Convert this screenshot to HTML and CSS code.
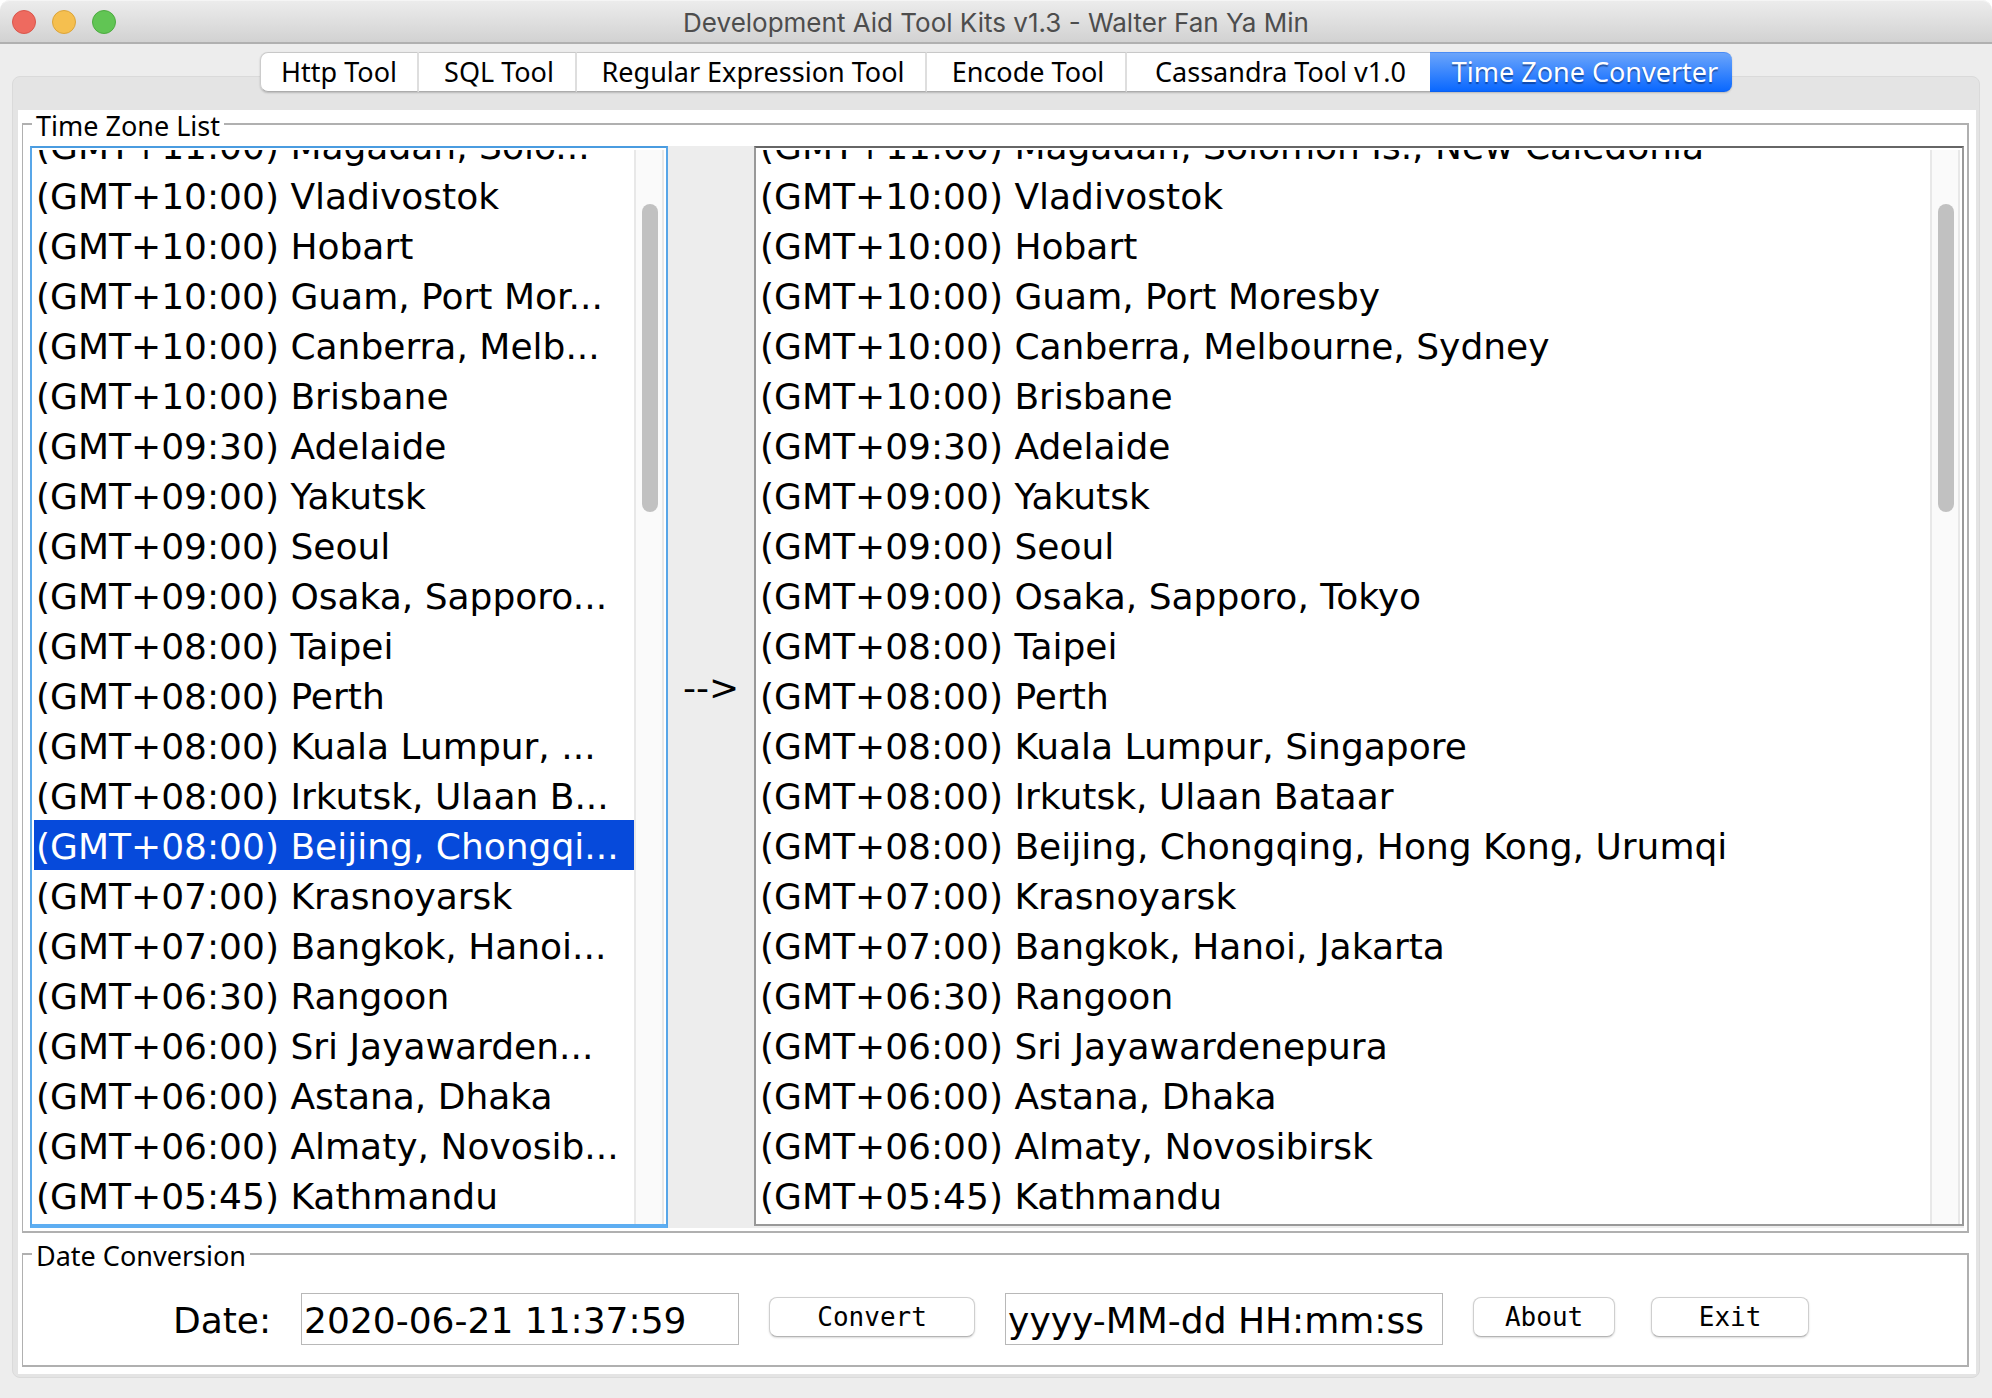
FILE: index.html
```html
<!DOCTYPE html>
<html lang="en">
<head>
<meta charset="utf-8">
<title>Development Aid Tool Kits v1.3 - Walter Fan Ya Min</title>
<link rel="stylesheet" href="styles.css">
</head>
<body>
<div class="window">
  <header class="titlebar">
    <div class="lights">
      <button class="light light-close" aria-label="Close"></button>
      <button class="light light-minimize" aria-label="Minimize"></button>
      <button class="light light-zoom" aria-label="Zoom"></button>
    </div>
    <h1 class="title">Development Aid Tool Kits v1.3 - Walter Fan Ya Min</h1>
  </header>

  <nav class="tabs" role="tablist">
    <button class="tab" role="tab">Http Tool</button>
    <button class="tab" role="tab">SQL Tool</button>
    <button class="tab" role="tab">Regular Expression Tool</button>
    <button class="tab" role="tab">Encode Tool</button>
    <button class="tab" role="tab">Cassandra Tool v1.0</button>
    <button class="tab tab-active" role="tab" aria-selected="true">Time Zone Converter</button>
  </nav>

  <main class="panel">
    <form class="page">
      <fieldset class="group group-zones">
        <legend class="group-title">Time Zone List</legend>
        <div class="zones">
          <div class="listbox listbox-source">
            <ul class="list" role="listbox" aria-label="Source time zone">
              <li class="row" role="option">(GMT+11:00) Magadan, Solo...</li>
              <li class="row" role="option">(GMT+10:00) Vladivostok</li>
              <li class="row" role="option">(GMT+10:00) Hobart</li>
              <li class="row" role="option">(GMT+10:00) Guam, Port Mor...</li>
              <li class="row" role="option">(GMT+10:00) Canberra, Melb...</li>
              <li class="row" role="option">(GMT+10:00) Brisbane</li>
              <li class="row" role="option">(GMT+09:30) Adelaide</li>
              <li class="row" role="option">(GMT+09:00) Yakutsk</li>
              <li class="row" role="option">(GMT+09:00) Seoul</li>
              <li class="row" role="option">(GMT+09:00) Osaka, Sapporo...</li>
              <li class="row" role="option">(GMT+08:00) Taipei</li>
              <li class="row" role="option">(GMT+08:00) Perth</li>
              <li class="row" role="option">(GMT+08:00) Kuala Lumpur, ...</li>
              <li class="row" role="option">(GMT+08:00) Irkutsk, Ulaan B...</li>
              <li class="row row-selected" role="option" aria-selected="true">(GMT+08:00) Beijing, Chongqi...</li>
              <li class="row" role="option">(GMT+07:00) Krasnoyarsk</li>
              <li class="row" role="option">(GMT+07:00) Bangkok, Hanoi...</li>
              <li class="row" role="option">(GMT+06:30) Rangoon</li>
              <li class="row" role="option">(GMT+06:00) Sri Jayawarden...</li>
              <li class="row" role="option">(GMT+06:00) Astana, Dhaka</li>
              <li class="row" role="option">(GMT+06:00) Almaty, Novosib...</li>
              <li class="row" role="option">(GMT+05:45) Kathmandu</li>
            </ul>
            <div class="track"><div class="thumb"></div></div>
          </div>
          <div class="arrow">--&gt;</div>
          <div class="listbox listbox-target">
            <ul class="list" role="listbox" aria-label="Target time zone">
              <li class="row" role="option">(GMT+11:00) Magadan, Solomon Is., New Caledonia</li>
              <li class="row" role="option">(GMT+10:00) Vladivostok</li>
              <li class="row" role="option">(GMT+10:00) Hobart</li>
              <li class="row" role="option">(GMT+10:00) Guam, Port Moresby</li>
              <li class="row" role="option">(GMT+10:00) Canberra, Melbourne, Sydney</li>
              <li class="row" role="option">(GMT+10:00) Brisbane</li>
              <li class="row" role="option">(GMT+09:30) Adelaide</li>
              <li class="row" role="option">(GMT+09:00) Yakutsk</li>
              <li class="row" role="option">(GMT+09:00) Seoul</li>
              <li class="row" role="option">(GMT+09:00) Osaka, Sapporo, Tokyo</li>
              <li class="row" role="option">(GMT+08:00) Taipei</li>
              <li class="row" role="option">(GMT+08:00) Perth</li>
              <li class="row" role="option">(GMT+08:00) Kuala Lumpur, Singapore</li>
              <li class="row" role="option">(GMT+08:00) Irkutsk, Ulaan Bataar</li>
              <li class="row" role="option">(GMT+08:00) Beijing, Chongqing, Hong Kong, Urumqi</li>
              <li class="row" role="option">(GMT+07:00) Krasnoyarsk</li>
              <li class="row" role="option">(GMT+07:00) Bangkok, Hanoi, Jakarta</li>
              <li class="row" role="option">(GMT+06:30) Rangoon</li>
              <li class="row" role="option">(GMT+06:00) Sri Jayawardenepura</li>
              <li class="row" role="option">(GMT+06:00) Astana, Dhaka</li>
              <li class="row" role="option">(GMT+06:00) Almaty, Novosibirsk</li>
              <li class="row" role="option">(GMT+05:45) Kathmandu</li>
            </ul>
            <div class="track"><div class="thumb"></div></div>
          </div>
        </div>
      </fieldset>

      <fieldset class="group group-convert">
        <legend class="group-title">Date Conversion</legend>
        <div class="controls">
          <label class="label" for="date">Date:</label>
          <input class="field" id="date" type="text" value="2020-06-21 11:37:59">
          <button class="button button-convert" type="button">Convert</button>
          <input class="field" id="format" type="text" value="yyyy-MM-dd HH:mm:ss" aria-label="Date format">
          <div class="actions">
            <button class="button button-about" type="button">About</button>
            <button class="button button-exit" type="button">Exit</button>
          </div>
        </div>
      </fieldset>
    </form>
  </main>
</div>
</body>
</html>
```
FILE: styles.css
```css
* {
  box-sizing: border-box;
}

body {
  margin: 0;
  background: #ffffff;
  color: #000000;
  font-family: "DejaVu Sans", sans-serif;
  font-size: 36px;
}

button,
input {
  margin: 0;
  color: inherit;
}

.window {
  display: flex;
  flex-direction: column;
  height: 100vh;
  background: #ededed;
  border-radius: 10px 10px 0 0;
}

/* Title bar */
.titlebar {
  display: grid;
  grid-template-columns: 1fr auto 1fr;
  align-items: center;
  flex: none;
  height: 44px;
  padding: 0 12px;
  background: linear-gradient(#ececec, #d2d2d2);
  border-top: 1px solid #f5f5f5;
  border-bottom: 2px solid #b0b0b0;
  border-radius: 10px 10px 0 0;
}

.lights {
  display: flex;
  gap: 16px;
}

.light {
  width: 24px;
  height: 24px;
  padding: 0;
  border: 1px solid;
  border-radius: 50%;
}

.light-close {
  background: #ee6a5f;
  border-color: #d9564b;
}

.light-minimize {
  background: #f5bf4f;
  border-color: #dba43a;
}

.light-zoom {
  background: #61c554;
  border-color: #4dab41;
}

.title {
  margin: 0;
  padding-top: 2px;
  color: #4d4d4d;
  font: 400 26px/38px Inter, sans-serif;
}

/* Tab strip, overlapping the top edge of the panel */
.tabs {
  position: relative;
  z-index: 1;
  display: grid;
  grid-template-columns: 159px 158px 350px 200px 303px 302px;
  flex: none;
  align-self: center;
  height: 40px;
  margin: 8px 0 -16px;
  border-radius: 8px;
  box-shadow: 0 1px 2px rgba(0, 0, 0, 0.2);
}

.tab {
  padding: 0 0 0 4px;
  background: #ffffff;
  border: solid #dedede;
  border-width: 1px 2px 1px 0;
  border-top-color: #c8c8c8;
  border-bottom-color: #acacac;
  font: 400 27px/36px "Noto Sans", sans-serif;
  white-space: nowrap;
}

.tab:first-child {
  padding-left: 0;
  border-left: 1px solid #cccccc;
  border-radius: 8px 0 0 8px;
}

.tab:nth-last-child(2) {
  border-right: 0;
}

.tab-active {
  padding-left: 8px;
  background: linear-gradient(#6ba5fb, #0a68ff);
  border: solid #4a8cf5;
  border-width: 1px 0;
  border-bottom-color: #0a60f0;
  border-radius: 0 8px 8px 0;
  color: #ffffff;
  text-shadow: 0 2px 1px rgba(0, 30, 90, 0.5);
}

.panel {
  display: flex;
  flex: 1;
  min-height: 0;
  margin: 0 12px 20px;
  padding: 33px 3px 3px 5px;
  background: #e4e4e4;
  border: 1px solid #dadada;
  border-radius: 8px;
}

.page {
  display: flex;
  flex: 1;
  flex-direction: column;
  gap: 7px;
  min-width: 0;
  padding: 0 7px 7px 4px;
  background: #ffffff;
}

/* Titled groups */
.group {
  display: flex;
  flex-direction: column;
  min-width: 0;
  min-height: 0;
  margin: 0;
  border: 2px solid #b0b0b0;
  border-left-width: 1px;
}

.group-zones {
  flex: 1;
  padding: 8px 3px 3px 7px;
}

.group-convert {
  flex: none;
  padding: 25px 7px 20px;
}

.group-title {
  margin-left: 2px;
  padding: 4px 4px 0;
  font: 400 27px/24px "Noto Sans", sans-serif;
}

/* Time zone lists */
.zones {
  display: grid;
  grid-template-columns: 638fr 86px 1210fr;
  grid-template-rows: minmax(0, 1fr);
  flex: 1;
  min-height: 0;
  background: #ededed;
}

.listbox {
  display: flex;
  min-width: 0;
  padding: 2px 2px 0;
  background: #ffffff;
  border: 2px solid #999999;
}

.listbox-source {
  border-color: #58a6e8;
  border-top-color: #4a9ce0;
  border-bottom: 4px solid #5eaef2;
}

.listbox-target {
  border-top-color: #666666;
  border-bottom-width: 2px;
  margin-bottom: 2px;
}

/* Rows hang from the bottom edge, so the topmost one is scrolled partly away */
.list {
  display: flex;
  flex: 1;
  flex-direction: column;
  justify-content: flex-end;
  min-width: 0;
  margin: 0;
  padding: 0 0 4px;
  overflow: hidden;
  list-style: none;
}

.row {
  flex: none;
  height: 50px;
  padding: 4px 0 0 2px;
  line-height: 46px;
  white-space: nowrap;
}

.row-selected {
  background: #064adb;
  color: #ffffff;
}

.track {
  flex: none;
  width: 30px;
  padding: 54px 6px 0;
  background: #fafafa;
  border: solid #e8e8e8;
  border-width: 0 2px;
}

.thumb {
  width: 16px;
  height: 308px;
  background: #c1c1c1;
  border-radius: 8px;
}

.arrow {
  display: flex;
  align-items: center;
  justify-content: center;
}

/* Conversion controls */
.controls {
  display: flex;
  align-items: center;
  justify-content: center;
  gap: 30px;
  padding-right: 8px;
}

.actions {
  display: flex;
  gap: 36px;
}

.label {
  padding-top: 3px;
}

.field {
  width: 438px;
  height: 52px;
  padding: 3px 2px 0;
  background: #ffffff;
  border: 1px solid #b8b8b8;
  border-radius: 0;
  font: 400 36px/46px "DejaVu Sans", sans-serif;
}

.button {
  height: 40px;
  margin-bottom: 4px;
  padding: 0;
  background: #ffffff;
  border: 1px solid #cfcfcf;
  border-bottom-color: #b4b4b4;
  border-radius: 8px;
  box-shadow: 0 1px 2px rgba(0, 0, 0, 0.15);
  font: 400 26px/36px "DejaVu Sans Mono", monospace;
}

.button-convert {
  width: 206px;
}

.button-about {
  width: 142px;
}

.button-exit {
  width: 158px;
}
```
